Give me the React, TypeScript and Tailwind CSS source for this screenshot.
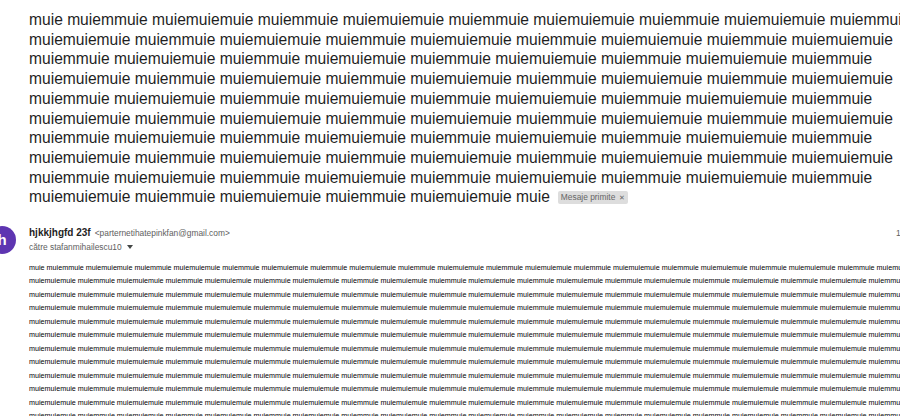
import React from 'react';

const MM = 'muiemmuie';
const MMM = 'muiemuiemuie';

// alternating words, starting with the given one
const alternate = (count: number, startWithShort: boolean) =>
  Array.from({ length: count }, (_, i) => ((i % 2 === 0) === startWithShort ? MM : MMM));

const subjectWords = ['muie', ...alternate(86, true), 'muie'].join(' ');

const bodyLines = [
  ['muie', ...alternate(24, true)].join(' '),
  ...Array.from({ length: 11 }, () => alternate(24, false).join(' ')),
];

const App: React.FC = () => {
  return (
    <div className="h-[416px] w-[900px] overflow-hidden bg-white font-['Liberation_Sans',Arial,sans-serif]">
      {/* subject */}
      <div className="w-[960px] pl-[29px] pt-[10px]">
        <h2 className="w-[915px] text-[15.6px] font-normal leading-[19.7px] text-[#1f1f1f]">
          {subjectWords}
          <span className="ml-[8px] inline-block rounded-[2px] bg-[#dddddd] px-[3px] align-[2px] text-[8.4px] leading-[12px] text-[#666666]">
            Mesaje primite <span className="ml-[1px] text-[7px]">✕</span>
          </span>
        </h2>
      </div>

      {/* sender */}
      <div className="mt-[19px] flex items-start">
        <div className="ml-[-12px] flex h-[28px] w-[28px] shrink-0 items-center justify-center rounded-full bg-[#5e35b1] text-[15px] font-bold text-white">
          h
        </div>
        <div className="ml-[13px] flex flex-col">
          <div className="flex w-[900px] items-center">
            <div className="flex w-[867px] shrink-0 items-baseline leading-[14px]">
              <span className="text-[10px] font-bold text-[#1f1f1f]">hjkkjhgfd 23f</span>
              <span className="ml-[4px] text-[8.4px] text-[#5e5e5e]">&lt;parternetihatepinkfan@gmail.com&gt;</span>
            </div>
            <span className="whitespace-nowrap text-[8.4px] leading-[14px] text-[#5e5e5e]">13:08 (acum 2 ore)</span>
          </div>
          <div className="flex items-center text-[8.4px] leading-[14px] text-[#5e5e5e]">
            <span>către stafanmihailescu10</span>
            <svg className="ml-[5px]" width="6" height="4" viewBox="0 0 6 4">
              <path d="M0 0 L6 0 L3 4 Z" fill="#444746" />
            </svg>
          </div>
        </div>
      </div>

      {/* body */}
      <div className="mt-[7px] pl-[29px] text-[7.2px] leading-[13.45px] text-black">
        {bodyLines.map((line, i) => (
          <div key={i} className="whitespace-nowrap">
            {line}
          </div>
        ))}
      </div>
    </div>
  );
};

export default App;
